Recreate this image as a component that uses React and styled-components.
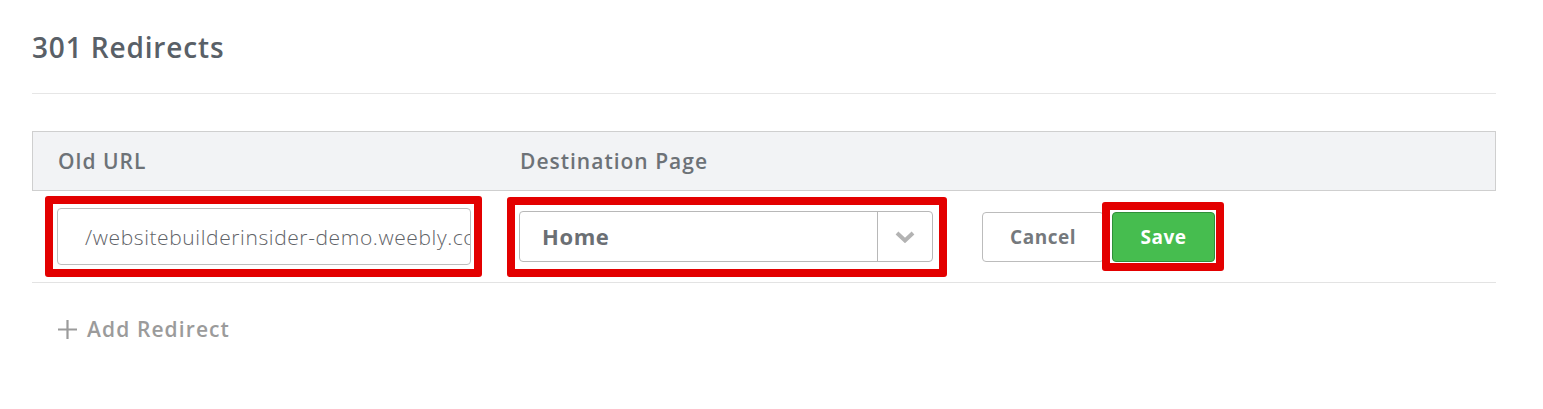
import React from 'react'
import styled, { createGlobalStyle } from 'styled-components'

const GlobalStyle = createGlobalStyle`
  html, body {
    margin: 0;
    padding: 0;
    background: #ffffff;
    font-family: 'Open Sans', 'Liberation Sans', sans-serif;
  }
`

const Page = styled.div`
  width: 1464px;
  padding: 28px 0 0 32px;
`

const Title = styled.h1`
  margin: 0;
  font-size: 28px;
  line-height: 38px;
  font-weight: 600;
  color: #596067;
  letter-spacing: 0.85px;
`

const Divider = styled.div`
  height: 1px;
  background: #e6e6e6;
  margin-top: 27px;
`

const Table = styled.div`
  margin-top: 37px;
`

const HeaderRow = styled.div`
  display: grid;
  grid-template-columns: 462px 462px 1fr;
  height: 60px;
  align-items: center;
  background: #f2f3f5;
  border: 1px solid #cfcfcf;
  box-sizing: border-box;
`

const HeaderCell = styled.div`
  padding-left: 25px;
  font-size: 21px;
  font-weight: 600;
  color: #6d7277;
  letter-spacing: 1px;
`

const Row = styled.div`
  display: grid;
  grid-template-columns: 462px 462px 1fr;
  height: 92px;
  align-items: center;
  border-bottom: 1px solid #e3e3e3;
  box-sizing: border-box;
`

const Cell = styled.div`
  display: flex;
  align-items: center;
  padding-left: 13px;
`

const Highlight = styled.div`
  display: flex;
  border: 8px solid #e30000;
  border-radius: 3px;
  padding: ${p => p.$padding};
`

const TextInput = styled.div`
  width: 414px;
  height: 57px;
  box-sizing: border-box;
  border: 1px solid #bdbdbd;
  border-radius: 4px;
  padding: 0 8px 0 27px;
  display: flex;
  align-items: center;
  overflow: hidden;
  white-space: nowrap;
  font-size: 21px;
  font-weight: 300;
  color: #5f6368;
  letter-spacing: 0.6px;
`

const Select = styled.div`
  width: 414px;
  height: 51px;
  box-sizing: border-box;
  border: 1px solid #b8b8b8;
  border-radius: 4px;
  display: flex;
  align-items: stretch;
`

const SelectValue = styled.div`
  flex: 1;
  display: flex;
  align-items: center;
  padding-left: 22px;
  font-size: 22px;
  font-weight: 700;
  color: #6b6f74;
  letter-spacing: 0.6px;
`

const SelectArrow = styled.div`
  width: 54px;
  border-left: 1px solid #b8b8b8;
  display: flex;
  align-items: center;
  justify-content: center;
  padding-top: 2px;
`

const Button = styled.button`
  height: 50px;
  box-sizing: border-box;
  border-radius: 4px;
  font-family: inherit;
  font-size: 19px;
  font-weight: 700;
  letter-spacing: 0.5px;
  padding: 0;
  cursor: pointer;
  width: ${p => p.$width}px;
  background: ${p => (p.$primary ? '#46bd4f' : '#ffffff')};
  color: ${p => (p.$primary ? '#ffffff' : '#75797d')};
  border: 1px solid ${p => (p.$primary ? '#2f8f38' : '#bcbcbc')};
`

const Actions = styled.div`
  display: flex;
  align-items: center;
  padding-left: 26px;
`

const AddLink = styled.div`
  display: flex;
  align-items: center;
  gap: 10px;
  padding: 32px 0 0 26px;
  font-size: 21px;
  font-weight: 600;
  color: #9b9b9b;
  letter-spacing: 1.1px;
`

const Chevron = () => (
  <svg width="20" height="12" viewBox="0 0 20 12">
    <polyline points="2,2 10,9.5 18,2" fill="none" stroke="#b3b3b3" strokeWidth="4" />
  </svg>
)

const Plus = () => (
  <svg width="19" height="19" viewBox="0 0 19 19">
    <path d="M9.5 0v19M0 9.5h19" stroke="#9b9b9b" strokeWidth="2.2" />
  </svg>
)

const App = () => {
  return (
    <Page>
      <GlobalStyle />
      <Title>301 Redirects</Title>
      <Divider />
      <Table>
        <HeaderRow>
          <HeaderCell>Old URL</HeaderCell>
          <HeaderCell>Destination Page</HeaderCell>
          <div />
        </HeaderRow>
        <Row>
          <Cell>
            <Highlight $padding="4px 3px 4px 4px">
              <TextInput>/websitebuilderinsider-demo.weebly.com</TextInput>
            </Highlight>
          </Cell>
          <Cell>
            <Highlight $padding="6px 6px 7px 4px">
              <Select>
                <SelectValue>Home</SelectValue>
                <SelectArrow><Chevron /></SelectArrow>
              </Select>
            </Highlight>
          </Cell>
          <Actions>
            <Button $width={122}>Cancel</Button>
            <Highlight $padding="2px 1px 1px 2px" style={{ marginLeft: -2 }}>
              <Button $primary $width={103}>Save</Button>
            </Highlight>
          </Actions>
        </Row>
      </Table>
      <AddLink><Plus />Add Redirect</AddLink>
    </Page>
  )
}

export default App
